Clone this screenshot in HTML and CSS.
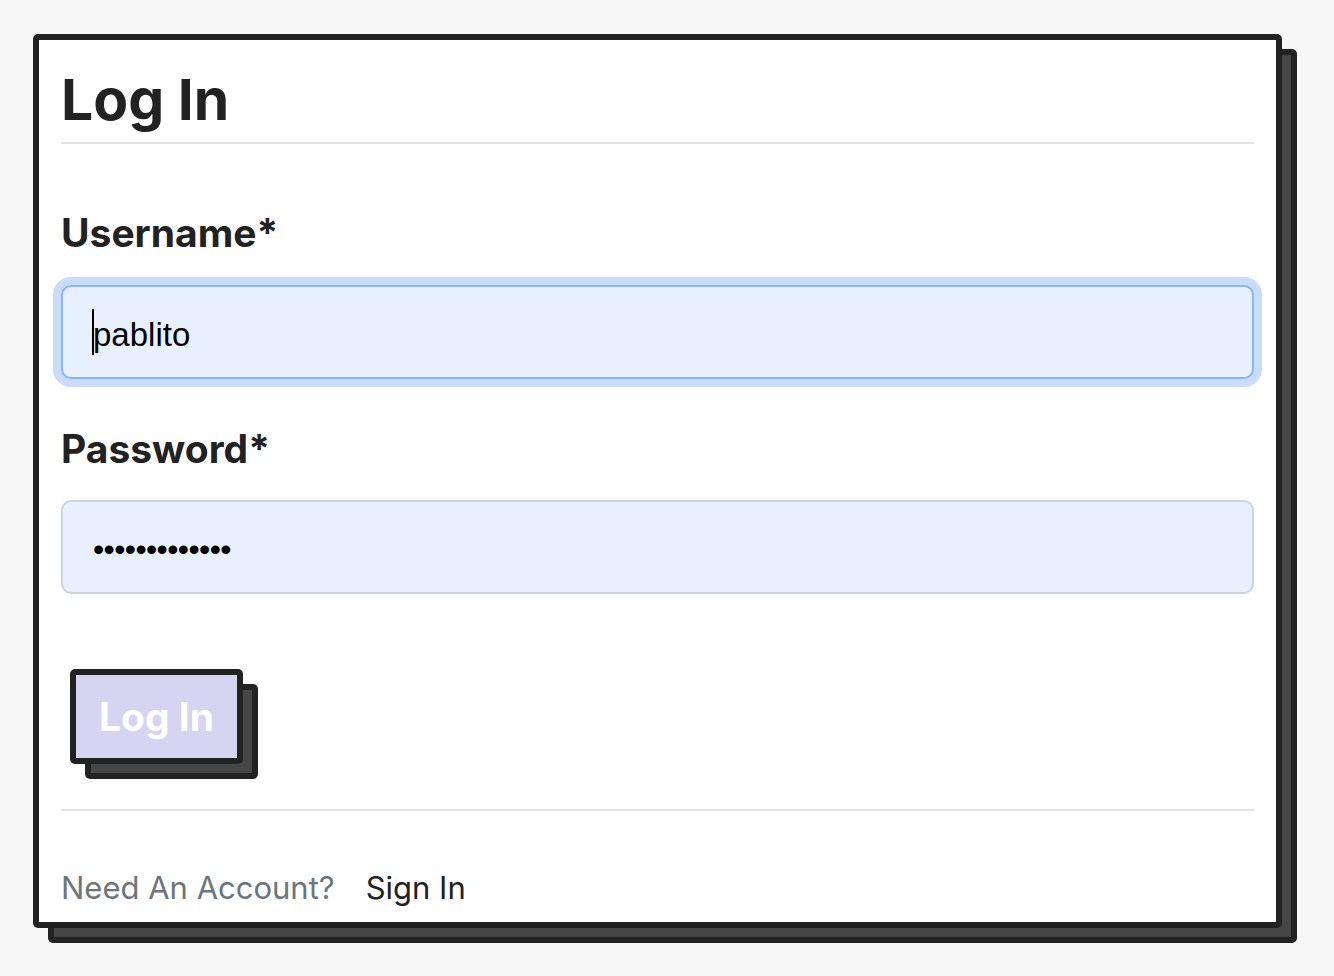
FILE: index.html
```html
<!DOCTYPE html>
<html lang="en">
<head>
<meta charset="utf-8">
<title>Log In</title>
<link rel="stylesheet" href="styles.css">
</head>
<body>
<div class="page">
  <div class="card">
    <h1 class="title">Log In</h1>
    <hr class="rule rule-top">
    <form class="form">
      <div class="field field-user">
        <label class="label" for="username">Username*</label>
        <div class="control-wrap">
          <input id="username" class="control control-focus" type="text" value="pablito">
          <span class="caret"></span>
        </div>
      </div>
      <div class="field field-pass">
        <label class="label" for="password">Password*</label>
        <input id="password" class="control control-pass" type="password" value="abcdefghijklm">
      </div>
      <div class="actions">
        <button class="btn" type="button">Log In</button>
      </div>
    </form>
    <hr class="rule rule-bottom">
    <div class="footer">
      <span class="muted">Need An Account?</span>
      <a class="link" href="#">Sign In</a>
    </div>
  </div>
</div>
</body>
</html>
```
FILE: styles.css
```css
* { box-sizing: border-box; }

html, body {
  margin: 0;
  padding: 0;
  background: #f7f7f7;
}

body {
  font-family: Inter, "Liberation Sans", sans-serif;
  color: #222;
}

.page {
  padding: 34px 52px 48px 33px;
}

.card {
  background: #fff;
  border: 6px solid #222;
  border-radius: 5px;
  padding: 26px 22px 12px 22px;
  box-shadow: 15px 15px 0 -6px #464646, 15px 15px 0 0 #222;
}

.title {
  margin: 0;
  font-size: 57px;
  line-height: 68px;
  font-weight: 700;
  color: #222;
}

.rule {
  border: 0;
  height: 2px;
  background: #e2e2e5;
  margin: 0;
}

.rule-top {
  margin-top: 8px;
}

.form {
  display: flex;
  flex-direction: column;
}

.field {
  display: flex;
  flex-direction: column;
}

.field-user {
  margin-top: 65px;
}

.field-pass {
  margin-top: 46px;
}

.label {
  font-size: 39px;
  line-height: 47px;
  font-weight: 700;
  color: #222;
  margin-bottom: 29px;
}

.field-pass .label {
  margin-bottom: 28px;
}

.control-wrap {
  position: relative;
}

.control {
  display: block;
  width: 100%;
  height: 94px;
  padding: 5px 30px 0;
  font-family: "Liberation Sans", Arial, sans-serif;
  font-size: 33px;
  color: #000;
  background: #e8f0fe;
  border: 2px solid #ced4da;
  border-radius: 10px;
  outline: none;
}

.control-focus {
  border-color: #8ab6f7;
  box-shadow: 0 0 0 8px #c9dcfb;
}

.control-pass {
  font-size: 32px;
  padding-top: 4px;
  letter-spacing: -0.6px;
}

.caret {
  position: absolute;
  left: 31px;
  top: 24px;
  width: 2px;
  height: 46px;
  background: #000;
}

.actions {
  margin-top: 75px;
  display: flex;
}

.btn {
  margin-left: 9px;
  font-family: Inter, "Liberation Sans", sans-serif;
  font-size: 39px;
  line-height: 44px;
  font-weight: 700;
  color: #fff;
  background: #d6d4f1;
  border: 6px solid #222;
  border-radius: 5px;
  padding: 20px 23px 19px;
  box-shadow: 15px 15px 0 -6px #464646, 15px 15px 0 0 #222;
  cursor: pointer;
}

.rule-bottom {
  margin-top: 45px;
}

.footer {
  margin-top: 54px;
  display: flex;
  align-items: baseline;
  font-size: 31px;
  line-height: 45px;
}

.muted {
  color: #6c757d;
}

.link {
  margin-left: 31px;
  color: #222;
  text-decoration: none;
}
```
